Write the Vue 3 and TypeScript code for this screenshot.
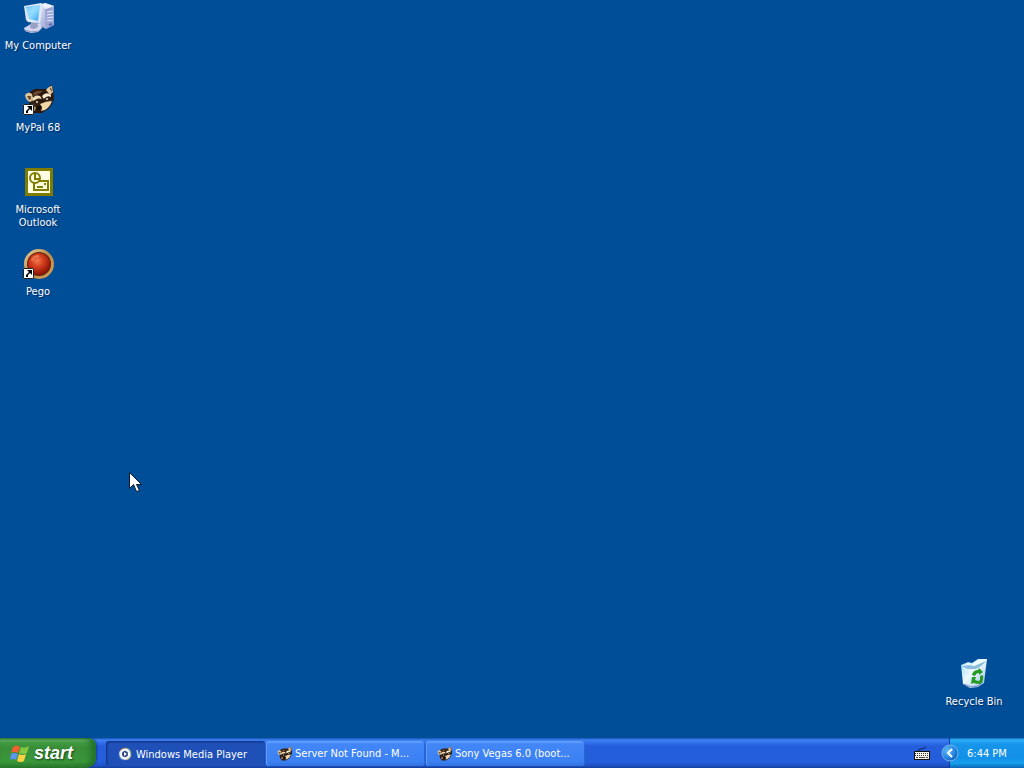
<script setup lang="ts">
interface Item { id: string; label: string }
interface Task extends Item { active: boolean }

const shortcuts: Item[] = [
  { id: 'computer', label: 'My Computer' },
  { id: 'mypal', label: 'MyPal 68' },
  { id: 'outlook', label: 'Microsoft Outlook' },
  { id: 'pego', label: 'Pego' },
]

const tasks: Task[] = [
  { id: 'wmp', label: 'Windows Media Player', active: true },
  { id: 'server', label: 'Server Not Found - M...', active: false },
  { id: 'vegas', label: 'Sony Vegas 6.0 (boot...', active: false },
]
</script>

<template>
  <div class="screen">
    <svg width="0" height="0" class="defs" aria-hidden="true">
      <defs>
        <linearGradient id="glass" x1="0" y1="0" x2="1" y2="1">
          <stop offset="0" stop-color="#4fb4f2" /><stop offset=".5" stop-color="#8edcff" /><stop offset="1" stop-color="#3b9df0" />
        </linearGradient>
        <linearGradient id="tower" x1="0" y1="0" x2="1" y2="1">
          <stop offset="0" stop-color="#e4e8f8" /><stop offset="1" stop-color="#7c8cc8" />
        </linearGradient>
        <linearGradient id="bin" x1="0" y1="0" x2="1" y2="1">
          <stop offset="0" stop-color="#8fd4f0" /><stop offset=".45" stop-color="#eef9ff" /><stop offset="1" stop-color="#92b8e2" />
        </linearGradient>
        <linearGradient id="gold" x1="0" y1="0" x2="1" y2="1">
          <stop offset="0" stop-color="#ecd49b" /><stop offset=".5" stop-color="#b98a4c" /><stop offset="1" stop-color="#d9a04f" />
        </linearGradient>
        <radialGradient id="ruby" cx=".42" cy=".35" r=".65">
          <stop offset="0" stop-color="#f07a50" /><stop offset=".45" stop-color="#d23c1c" /><stop offset="1" stop-color="#8a1405" />
        </radialGradient>
        <radialGradient id="orb" cx=".35" cy=".35" r=".75">
          <stop offset="0" stop-color="#62b8fa" /><stop offset=".6" stop-color="#2387e2" /><stop offset="1" stop-color="#0c50b0" />
        </radialGradient>
        <symbol id="raccoon" viewBox="0 0 32 32">
          <path d="M7 9Q12 4 18 5L25 5 29 1 31 4 32 14Q31 21 26 25L20 29 12 29 8 24 7 17Z" fill="#2c1a10" />
          <path d="M3 11Q6 7 10 10L11 14 9 18Q4 18 3 11Z" fill="#dcc59b" />
          <path d="m5 12 4 0 0 3-2 1Z" fill="#70502f" />
          <path d="M24 6Q27 2 30 2L31 8 28 11Z" fill="#e2c99d" />
          <path d="m28 5 1-2 1 5Z" fill="#4b2c18" />
          <path d="M11 9Q15 6 21 7L18 9 12 12Z" fill="#6b482e" />
          <path d="M10 15Q13 10 18 12L20 15Q15 13 11 18Z" fill="#f1ddb5" />
          <path d="M20 12Q24 7 29 11L29 13Q25 11 22 15Z" fill="#f8ebd0" />
          <path d="M10 18Q14 14 18 17L18 21 13 23Q10 22 10 18Z" fill="#352015" />
          <path d="M22 15Q26 11 30 15L27 18 23 18Z" fill="#352015" />
          <path d="M18 20Q24 17 30 17Q28 23 23 26L19 27Q21 24 18 20Z" fill="#f0d7a8" />
          <path d="M10 22 14 23 13 27Q10 26 10 22Z" fill="#b68e60" />
          <path d="M15 23Q18 20 20 23L18 26 15 26Z" fill="#160e09" />
          <circle cx="15" cy="18" r="1" fill="#dbe3d9" /><circle cx="25" cy="15" r="1" fill="#dbe3d9" />
        </symbol>
        <symbol id="arrow" viewBox="0 0 11 11">
          <path d="M0 0h11v11H0Z" fill="#fff" /><path d="M.5.5h10v10H.5Z" fill="none" stroke="#222" />
          <path d="M4 2h5v5L7 5 5 7 5 9 3 9 3 7 6 4Z" fill="#000" />
        </symbol>
      </defs>
    </svg>

    <main class="desktop">
      <nav class="shortcuts" aria-label="Desktop">
        <button v-for="s in shortcuts" :key="s.id" class="shortcut" type="button">
          <svg class="icon" viewBox="0 0 32 32" aria-hidden="true">
            <template v-if="s.id === 'computer'">
              <path d="m18 3 5-2 9 3v19l-8 4-6-3Z" fill="url(#tower)" />
              <path d="m23 7 9-2v18l-8 4Z" fill="#98a3d6" />
              <path d="m18 3 5-2 9 3-8 3Z" fill="#edf0fc" />
              <path d="m25 10 6-1m-6 4 6-1m-6 4 6-1m-6 4 6-1" stroke="#e8ebff" />
              <path d="m27 23 3-1" stroke="#5968aa" stroke-width="2" />
              <path d="m2 26 7-4 9-1 2 5-4 4-7 1-6-2Z" fill="#d4d5ec" />
              <path d="m9 20 6 0 1 5-4 2-4-1Z" fill="#969fc6" />
              <path d="m3 28 6 2 8-1" fill="none" stroke="#8c96c5" />
              <path d="m2 4 17-3 2 1-3 19-12-1-2-2Z" fill="#e0e7f8" />
              <path d="m4 5 14-2-2 16-9-2Z" fill="url(#glass)" />
              <path d="m4 6 12-2-7 7-4 2Z" fill="#b9e8ff" opacity=".4" />
            </template>
            <use v-else-if="s.id === 'mypal'" href="#raccoon" />
            <template v-else-if="s.id === 'outlook'">
              <path d="M3 2h28v28H3Z" fill="#807c00" /><path d="M6 5h22v22H6Z" fill="#fffde2" />
              <g fill="none" stroke="#807c00" stroke-width="2">
                <path d="M12 15h14v9H12Z" /><circle cx="13" cy="12" r="5" fill="#fffde2" />
                <path d="M13 8v5h4M15 21h6m1-3h2" />
              </g>
            </template>
            <template v-else>
              <circle cx="17" cy="16" r="15" fill="url(#gold)" /><circle cx="17" cy="16" r="12" fill="#63200f" />
              <circle cx="17" cy="16" r="11" fill="url(#ruby)" />
              <path d="M10 13Q11 8 17 8" fill="none" stroke="#f3a078" stroke-width="2" opacity=".5" />
            </template>
            <use v-if="s.id === 'mypal' || s.id === 'pego'" href="#arrow" x="1" y="20" width="11" height="11" />
          </svg>
          <span>{{ s.label }}</span>
        </button>
      </nav>

      <button class="shortcut recycle" type="button">
        <svg class="icon" viewBox="0 0 32 32" aria-hidden="true">
          <path d="M3 7 10 4 14 5 20 1 29 1 26 25 20 29 12 30 5 26Z" fill="url(#bin)" />
          <path d="M4 8 10 6 16 8 28 3 24 8 18 11 9 11Z" fill="#8bbede" />
          <path d="M4 8 10 5 14 7 20 2 28 2 20 6 16 8 11 7Z" fill="#effcff" />
          <path d="M5 10Q14 14 18 12T27 5" fill="none" stroke="#fff" opacity=".7" />
          <path d="m6 26 7 3 7-1 5-4" fill="none" stroke="#6e8cbe" />
          <g fill="#259b22">
            <path d="M14 17Q15 12 20 12l1-2 4 4-4 3 0-2Q18 15 17 18Z" />
            <path d="M14 19h4l-1 3 3 1 0 3-5-1-2 1Z" />
            <path d="M22 18l3-1Q26 24 22 26l0 1-3-3 3-2Z" />
          </g>
        </svg>
        <span>Recycle Bin</span>
      </button>
    </main>

    <footer class="taskbar">
      <button class="start" type="button">
        <svg class="flag" viewBox="0 0 20 20" aria-hidden="true">
          <path d="M3 4Q7 1 10 4L8 10Q5 8 1 10Z" fill="#f2602f" /><path d="M11 4Q14 6 19 3L17 10Q13 12 9 10Z" fill="#83c83f" />
          <path d="M1 11Q5 9 8 11L6 17Q3 15 0 17Z" fill="#5d94ef" /><path d="M9 11Q12 13 16 11L14 18Q11 20 7 18Z" fill="#fbd244" />
        </svg>
        <span>start</span>
      </button>
      <nav class="tasks" aria-label="Running programs">
        <button v-for="t in tasks" :key="t.id" class="task" :class="{ active: t.active }" type="button">
          <svg class="small" viewBox="0 0 16 16" aria-hidden="true">
            <template v-if="t.id === 'wmp'">
              <circle cx="8" cy="8" r="6" fill="#dce5ef" />
              <path d="M3 5A6 6 0 0 1 8 2" fill="none" stroke="#c9764a" />
              <path d="M9 2A6 6 0 0 1 14 8" fill="none" stroke="#71a36b" />
              <path d="M2 8A6 6 0 0 0 7 14" fill="none" stroke="#5c91cf" />
              <path d="M14 9A6 6 0 0 1 9 14" fill="none" stroke="#c9b27b" />
              <circle cx="8" cy="8" r="5" fill="#f4f7fd" /><circle cx="8" cy="8" r="3" fill="#283f7c" />
              <path d="m7 6 3 2-3 2Z" fill="#fff" />
            </template>
            <use v-else href="#raccoon" />
          </svg>
          <span>{{ t.label }}</span>
        </button>
      </nav>
      <button class="keyboard" type="button" aria-label="Keyboard">
        <svg viewBox="0 0 16 14" aria-hidden="true">
          <path d="M4 5Q4 3 7 3T12 1" fill="none" stroke="#142355" />
          <path d="M0 5h16v9H0Z" fill="#101010" /><path d="M1 6h14v7H1Z" fill="#f4f4e8" />
          <path d="M1 7.5h14M1 9.5h14" stroke="#333" stroke-dasharray="1 1" /><path d="M2 11.5h2m1 0h6m1 0h2" stroke="#444" />
        </svg>
      </button>
      <section class="tray" aria-label="Notification area">
        <button class="expand" type="button" aria-label="Show hidden icons">
          <svg viewBox="0 0 18 18" aria-hidden="true">
            <circle cx="9" cy="9" r="8" fill="url(#orb)" stroke="#7ab6ef" /><path d="m11 5-4 4 4 4" fill="none" stroke="#fff" stroke-width="2" />
          </svg>
        </button>
        <time>6:44 PM</time>
      </section>
    </footer>

    <svg class="cursor" viewBox="0 0 13 21" aria-hidden="true">
      <path d="M.5.5v16l4-4 3 7 3-1-3-6h5Z" fill="#fff" stroke="#101828" />
    </svg>
  </div>
</template>

<style>
body { margin: 0; background: #004e98; }
</style>

<style scoped>
.screen { position: relative; display: flex; flex-direction: column; height: 100vh; overflow: hidden; background: #004e98; font: 11px/13px "DejaVu Sans Condensed", "Noto Sans", sans-serif; color: #fff; }
.defs { position: absolute; }
button { border: 0; padding: 0; margin: 0; background: none; color: inherit; font: inherit; }
.desktop { flex: 1; min-height: 0; display: flex; justify-content: space-between; }
.shortcuts { display: grid; grid-auto-rows: 82px; align-content: start; width: 76px; }
.shortcut { display: flex; flex-direction: column; align-items: center; gap: 5px; padding: 2px 2px 0; text-align: center; text-shadow: 1px 1px 1px #002a60; }
.icon { width: 32px; height: 32px; flex: none; }
.recycle { align-self: flex-end; width: 100px; height: 82px; }
.taskbar { height: 30px; flex: none; display: flex; align-items: stretch; background: linear-gradient(#1a50b4 0, #3a84f2 2px, #3474ee 4px, #245edb 8px, #245edb 24px, #1d4fc0 28px, #143c98 30px); }
.start { display: flex; align-items: center; gap: 4px; width: 96px; padding: 0 0 1px 10px; border-radius: 0 8px 10px 0; background: linear-gradient(#2b7a2e 0, #6bb56a 2px, #429a42 5px, #388e38 10px, #3a973a 24px, #2a7a2a 30px); box-shadow: inset -5px 0 6px #22702a, 1px 0 2px #173f9c; font: italic bold 18px/20px "Liberation Sans", sans-serif; text-shadow: 1px 1px 2px #17451a; }
.flag { width: 20px; height: 20px; }
.tasks { flex: 1; min-width: 0; display: flex; gap: 1px; padding: 3px 0 2px 10px; }
.task { flex: 0 1 159px; min-width: 0; display: flex; align-items: center; gap: 3px; padding: 0 4px 0 10px; border-radius: 3px; background: linear-gradient(#6ba4ff 0, #4286f7 3px, #3c81f3 20px, #3273e3 25px); box-shadow: inset 1px 0 #62a0ff, inset -1px 0 #2b66d2; white-space: nowrap; overflow: hidden; }
.task.active { background: #1e50b7; box-shadow: inset 1px 1px 2px #112f79; padding-top: 1px; padding-left: 11px; }
.small { width: 16px; height: 16px; flex: none; }
.keyboard { width: 16px; margin-right: 11px; display: flex; align-items: center; }
.keyboard svg { width: 16px; height: 14px; }
.tray { flex: none; display: flex; align-items: center; gap: 8px; box-sizing: border-box; min-width: 83px; padding-right: 16px; position: relative; z-index: 0; }
.tray::after { content: ""; position: absolute; z-index: -1; inset: 0 0 0 8px; border-left: 1px solid #103e9c; background: linear-gradient(#1769bb 0, #2ab2f7 2px, #1795ea 6px, #1290e9 20px, #16a0ee 25px, #0c65b7 30px); }
.expand { width: 18px; height: 18px; }
.expand svg { display: block; width: 18px; height: 18px; }
.cursor { position: absolute; left: 129px; top: 472px; width: 13px; height: 21px; }
</style>
